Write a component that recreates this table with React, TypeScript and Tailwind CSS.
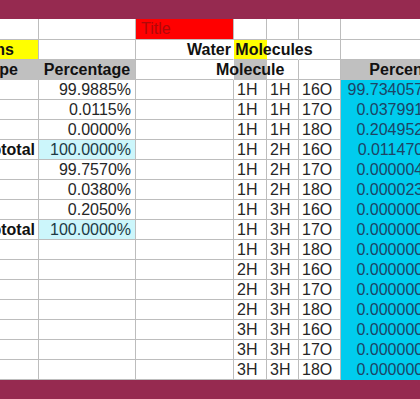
import React from 'react';

type CellProps = {
  bg?: string;
  rc?: string;
  bc?: string;
  tall?: boolean;
  className?: string;
  children?: React.ReactNode;
};

// one spreadsheet cell; text may spill into the next cells like in a sheet
function Cell({ bg = 'bg-white', rc = 'border-r-[#bdbdbd]', bc = 'border-b-[#bdbdbd]', tall, className = '', children }: CellProps) {
  return (
    <td className={`p-0 align-top border-r border-b ${rc} ${bc} ${bg}`}>
      <div className={`${tall ? 'h-[20px]' : 'h-[19px]'} leading-[19px] whitespace-nowrap ${className}`}>{children}</div>
    </td>
  );
}

const isotopes: { label?: string; pct?: string; sub?: boolean }[] = [
  { pct: '99.9885%' },
  { pct: '0.0115%' },
  { pct: '0.0000%' },
  { label: 'Subtotal', pct: '100.0000%', sub: true },
  { pct: '99.7570%' },
  { pct: '0.0380%' },
  { pct: '0.2050%' },
  { label: 'Subtotal', pct: '100.0000%', sub: true },
  {},
  {},
  {},
  {},
  {},
  {},
  {},
];

const molecules: [string, string, string, string][] = [
  ['1H', '1H', '16O', '99.7340572814%'],
  ['1H', '1H', '17O', '0.0379910231%'],
  ['1H', '1H', '18O', '0.2049520476%'],
  ['1H', '2H', '16O', '0.0114700823%'],
  ['1H', '2H', '17O', '0.0000043703%'],
  ['1H', '2H', '18O', '0.0000235781%'],
  ['1H', '3H', '16O', '0.0000000000%'],
  ['1H', '3H', '17O', '0.0000000000%'],
  ['1H', '3H', '18O', '0.0000000000%'],
  ['2H', '3H', '16O', '0.0000000000%'],
  ['2H', '3H', '17O', '0.0000000000%'],
  ['2H', '3H', '18O', '0.0000000000%'],
  ['3H', '3H', '16O', '0.0000000000%'],
  ['3H', '3H', '17O', '0.0000000000%'],
  ['3H', '3H', '18O', '0.0000000000%'],
];

export default function App() {
  return (
    <div className="flex h-[399px] w-full flex-col overflow-hidden bg-white font-['Liberation_Sans',Arial,sans-serif] text-[16px] text-[#262626]">
      <div className="h-[19px] shrink-0 bg-[#962a50]" />

      <div className="shrink-0">
        <table className="w-[477px] table-fixed border-separate border-spacing-0">
          <colgroup>
            <col className="w-[39px]" />
            <col className="w-[97px]" />
            <col className="w-[98px]" />
            <col className="w-[33px]" />
            <col className="w-[32px]" />
            <col className="w-[42px]" />
            <col className="w-[136px]" />
          </colgroup>
          <tbody>
            <tr>
              <Cell tall />
              <Cell tall />
              <Cell tall bg="bg-[#ff0000]" className="pl-[5px] text-[#b00808]">
                Title
              </Cell>
              <Cell tall />
              <Cell tall />
              <Cell tall />
              <Cell tall />
            </tr>
            <tr>
              <Cell bg="bg-[#ffff00]">
                <div className="flex justify-end overflow-hidden pr-[24px] font-bold text-[#111]">Isotope Fractions</div>
              </Cell>
              <Cell />
              <Cell rc="border-r-transparent" className="pl-[51px] font-bold text-[#111]">
                Water Molecules
              </Cell>
              <Cell bg="bg-[#ffff00]" rc="border-r-transparent" />
              <Cell rc="border-r-transparent" />
              <Cell />
              <Cell />
            </tr>
            <tr>
              <Cell bg="bg-[#c0c0c0]" rc="border-r-transparent" bc="border-b-transparent">
                <div className="flex justify-end overflow-hidden pr-[20px] font-bold text-[#111]">Isotope</div>
              </Cell>
              <Cell bg="bg-[#c0c0c0]" bc="border-b-transparent" className="text-center font-bold text-[#111]">
                Percentage
              </Cell>
              <Cell rc="border-r-transparent" className="pl-[80px] font-bold text-[#111]">
                Molecule
              </Cell>
              <Cell bg="bg-[#c0c0c0]" rc="border-r-transparent" />
              <Cell />
              <Cell />
              <Cell bg="bg-[#c0c0c0]" rc="border-r-transparent" bc="border-b-transparent" className="pl-[8px] text-center font-bold text-[#111]">
                Percentage
              </Cell>
            </tr>
            {molecules.map(([h1, h2, o, pct], i) => {
              const iso = isotopes[i];
              return (
                <tr key={i}>
                  <Cell>
                    {iso.label && <div className="flex justify-end overflow-hidden pr-[3px] font-bold text-[#111]">{iso.label}</div>}
                  </Cell>
                  <Cell bg={iso.sub ? 'bg-[#ccf6fb]' : 'bg-white'} className={`pr-[4px] text-right ${iso.sub ? 'text-[#1c3a44]' : ''}`}>
                    {iso.pct}
                  </Cell>
                  <Cell />
                  <Cell className="pl-[3px]">{h1}</Cell>
                  <Cell className="pl-[3px]">{h2}</Cell>
                  <Cell className="pl-[3px]">{o}</Cell>
                  <Cell bg="bg-[#00ccee]" rc="border-r-transparent" bc="border-b-transparent" className="pr-[3px] text-right text-[#1d4466]">
                    {pct}
                  </Cell>
                </tr>
              );
            })}
          </tbody>
        </table>
      </div>

      <div className="flex-1 bg-[#962a50]" />
    </div>
  );
}
